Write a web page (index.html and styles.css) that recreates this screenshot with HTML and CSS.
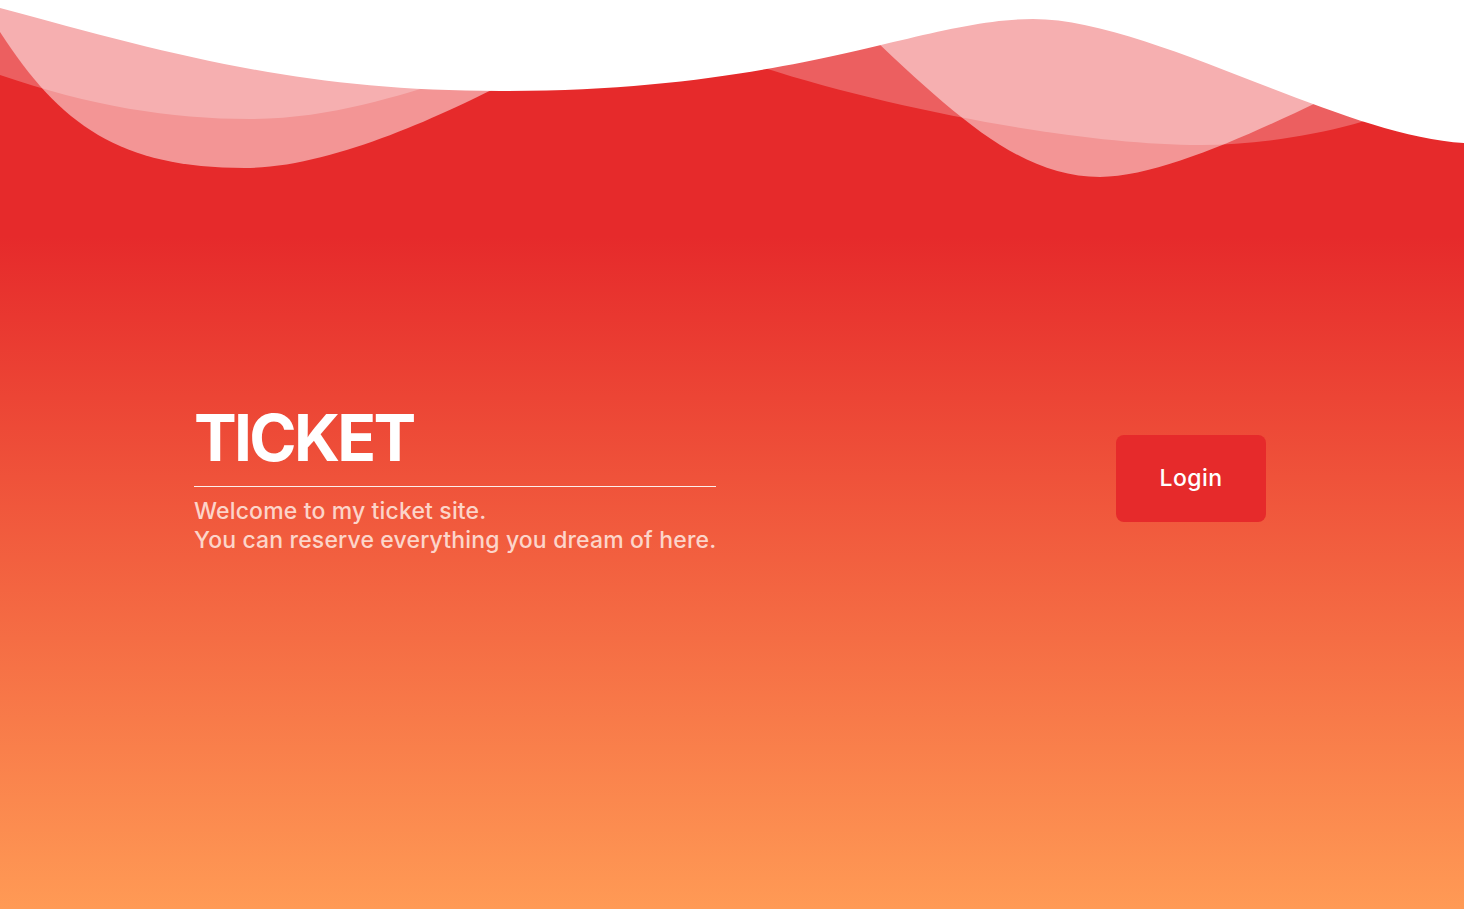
FILE: index.html
```html
<!DOCTYPE html>
<html lang="en">
<head>
<meta charset="utf-8">
<title>Ticket</title>
<link rel="stylesheet" href="styles.css">
</head>
<body>
<div class="hero">
  <svg class="waves" viewBox="0 0 1464 190" preserveAspectRatio="none" aria-hidden="true">
    <path class="wave-soft" d="M-10,0 L-10,72 L0,75 C90,106 170,119 250,119 C330,119 400,95 450,80 L470,0 Z"/>
    <path class="wave-soft" d="M740,0 L740,60 C880,108 1080,145 1200,145 C1280,145 1370,125 1420,100 L1440,0 Z"/>
    <path class="wave-strong" d="M0,0 L0,32 C60,125 120,168 245,168 C340,168 470,102 530,70 L560,0 Z"/>
    <path class="wave-strong" d="M840,0 L860,26 C955,116 1020,177 1100,177 C1170,177 1290,115 1360,82 L1380,0 Z"/>
    <path class="wave-top" d="M-10,0 L-10,5 L0,8 C170,54 300,91 500,91 C800,91 921,19 1033,19 C1150,19 1340,136 1464,143 L1474,144 L1474,0 Z"/>
  </svg>
  <main class="content">
    <section class="intro">
      <h1 class="title">TICKET</h1>
      <p class="lead">Welcome to my ticket site.<br>You can reserve everything you dream of here.</p>
    </section>
    <button class="login" type="button">Login</button>
  </main>
</div>
</body>
</html>
```
FILE: styles.css
```css
* { box-sizing: border-box; }
html, body { margin: 0; padding: 0; }
body {
  font-family: Inter, "Liberation Sans", sans-serif;
  background: #ffffff;
}
.hero {
  position: relative;
  min-height: 909px;
  height: 100vh;
  overflow: hidden;
  background: linear-gradient(180deg, #e62a2b 0%, #e62a2b 26%, #ff9a55 100%);
}
.waves {
  position: absolute;
  top: 0;
  left: 0;
  width: 100%;
  height: 190px;
  display: block;
}
.wave-soft { fill: rgba(255, 255, 255, 0.25); }
.wave-strong { fill: rgba(255, 255, 255, 0.5); }
.wave-top { fill: #ffffff; }
.content {
  position: relative;
  height: 100%;
  display: flex;
  align-items: center;
  justify-content: space-between;
  padding: 47px 198px 0 194px;
}
.intro {
  display: flex;
  flex-direction: column;
  width: max-content;
}
.title {
  margin: 0;
  font-size: 64px;
  font-weight: 700;
  line-height: 72px;
  color: #ffffff;
  letter-spacing: -2.7px;
  padding-bottom: 12px;
  border-bottom: 1px solid rgba(255, 255, 255, 0.9);
}
.lead {
  margin: 10px 0 0;
  font-size: 23px;
  line-height: 29px;
  color: rgba(255, 236, 228, 0.85);
  font-weight: 500;
  letter-spacing: 0.15px;
}
.login {
  width: 150px;
  height: 87px;
  border: none;
  border-radius: 8px;
  background: #e62a2b;
  color: #ffffff;
  font-family: inherit;
  font-size: 23px;
  font-weight: 500;
  letter-spacing: 0.4px;
  cursor: pointer;
}
```
